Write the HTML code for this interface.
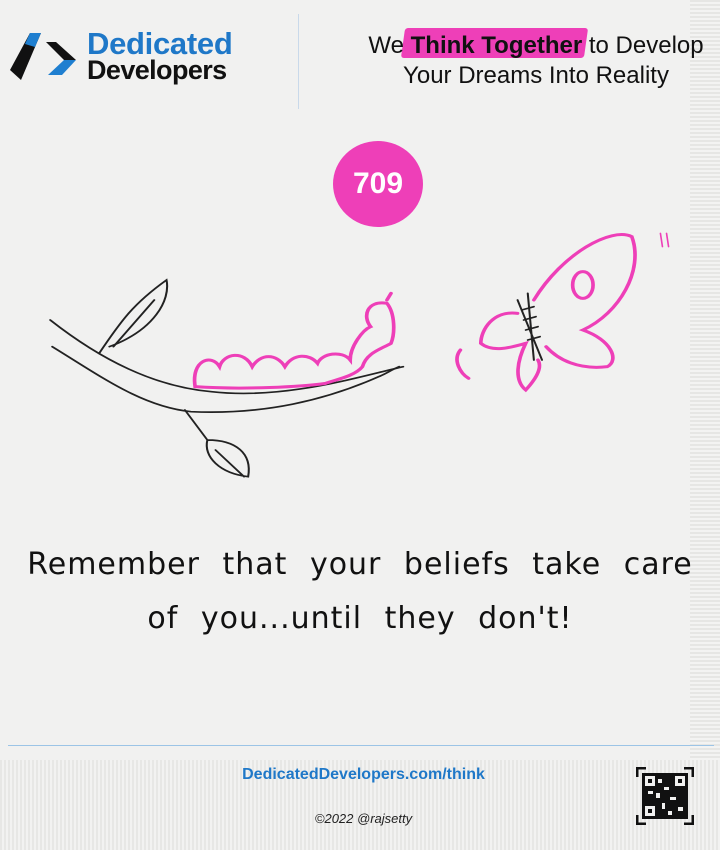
<!DOCTYPE html>
<html><head><meta charset="utf-8"><style>
body{margin:0;width:720px;height:850px;overflow:hidden;background:#f1f1f0;font-family:"Liberation Sans",sans-serif;position:relative}
.a{position:absolute}
</style></head><body>
<div class="a" style="left:690px;top:0;width:30px;height:850px;background:repeating-linear-gradient(0deg,#e6e6e4 0 2px,#f3f3f2 2px 4px)"></div>
<div class="a" style="left:0;top:760px;width:720px;height:90px;background:repeating-linear-gradient(90deg,#e7e7e5 0 2px,#f2f2f1 2px 4px)"></div>
<svg class="a" style="left:8px;top:30px" width="70" height="52" viewBox="0 0 70 52">
<polygon points="22,3 33,3 13,50 2,40" fill="#111"/>
<polygon points="22,3 33,3 27,17 17,14" fill="#1f7fd0"/>
<polygon points="38,12 48,12 68,30 56,30" fill="#111"/>
<polygon points="56,30 68,30 54,45 40,45" fill="#1f7fd0"/>
</svg>
<div class="a" style="left:87px;top:26px;font-size:31px;font-weight:bold;color:#1f78c8;letter-spacing:-0.3px">Dedicated</div>
<div class="a" style="left:87px;top:55px;font-size:27px;font-weight:bold;color:#111;letter-spacing:-0.6px">Developers</div>
<div class="a" style="left:298px;top:14px;width:1px;height:95px;background:#c9d9ea"></div>
<div class="a" style="left:403px;top:28px;width:183px;height:30px;background:#ee3fb8;transform:skewX(-8deg);border-radius:3px"></div>
<div class="a" style="left:330px;top:31px;width:412px;text-align:center;font-size:24px;color:#111;line-height:30px">We <b>Think Together</b> to Develop<br>Your Dreams Into Reality</div>
<div class="a" style="left:333px;top:141px;width:90px;height:86px;border-radius:50%;background:#ee3fb8;color:#fff;font-size:30px;font-weight:bold;text-align:center;line-height:86px">709</div>
<svg class="a" style="left:40px;top:220px" width="640" height="270" viewBox="0 0 1568 810" preserveAspectRatio="none" fill="none" stroke-linecap="round">
<g stroke="#222" stroke-width="5">
<path d="M25 300 C150 420 280 500 420 515 C600 540 780 470 890 440"/>
<path d="M30 380 C150 470 250 560 370 575 C550 585 700 540 830 470 C850 460 860 450 880 440"/>
<path d="M145 400 C200 300 230 250 310 180 C320 240 280 330 170 380"/>
<path d="M280 240 L180 380"/>
<path d="M355 570 L410 660 C400 710 440 760 510 770 C520 700 480 660 410 660 M430 690 L500 770"/>
<path d="M1170 240 L1230 420 M1195 220 L1210 420 M1180 270 L1210 260 M1185 300 L1215 290 M1190 330 L1220 320 M1195 360 L1225 350"/>
</g>
<g stroke="#ee3fb8" stroke-width="9">
<path d="M380 500 C370 420 420 400 440 440 C450 400 500 390 520 440 C540 400 580 400 600 440 C620 400 660 400 680 430 C690 400 740 390 760 420 C760 380 790 330 810 320 C790 290 800 240 850 250 C870 280 870 340 860 370 C830 390 800 400 790 440 C770 470 720 480 700 490 C640 500 500 510 380 500Z"/>
<path d="M850 240 L860 220"/>
<path d="M1210 240 C1280 100 1400 20 1450 50 C1480 150 1420 280 1330 330 C1400 360 1420 420 1390 440 C1320 450 1270 420 1240 380"/>
<path d="M1170 280 C1110 270 1080 330 1080 370 C1110 400 1160 380 1190 370 C1170 420 1160 480 1190 510 C1220 470 1230 440 1220 420"/>
<ellipse cx="1330" cy="195" rx="25" ry="40"/>
<path d="M1030 390 C1010 420 1030 460 1050 475"/>
</g>
<path d="M1520 40 L1525 80 M1535 40 L1540 80" stroke="#ee3fb8" stroke-width="4"/>
</svg>
<div class="a" style="left:0;top:538px;width:720px;text-align:center;font-family:'DejaVu Sans',cursive;font-size:30px;line-height:54px;color:#111;letter-spacing:1px;word-spacing:12px">Remember that your beliefs take care<br>of you...until they don't!</div>
<div class="a" style="left:8px;top:745px;width:706px;height:1px;background:#9cc4e6"></div>
<div class="a" style="left:0;top:766px;width:727px;text-align:center;font-size:16px;font-weight:bold;color:#1f78c8">DedicatedDevelopers.com/think</div>
<div class="a" style="left:0;top:811px;width:727px;text-align:center;font-size:13px;font-style:italic;color:#222">©2022 @rajsetty</div>
<svg class="a" style="left:636px;top:767px" width="58" height="58" viewBox="0 0 58 58">
<path d="M1 10V1H10M48 1H57V10M1 48V57H10M48 57H57V48" stroke="#111" stroke-width="3" fill="none"/>
<rect x="6" y="6" width="46" height="46" fill="#111"/>
<g fill="#f1f1f0"><rect x="9" y="9" width="10" height="10"/><rect x="39" y="9" width="10" height="10"/><rect x="9" y="39" width="10" height="10"/>
<rect x="22" y="12" width="4" height="4"/><rect x="28" y="20" width="5" height="3"/><rect x="20" y="26" width="4" height="5"/><rect x="34" y="30" width="6" height="3"/><rect x="26" y="36" width="3" height="6"/><rect x="42" y="40" width="5" height="4"/><rect x="12" y="24" width="5" height="3"/><rect x="32" y="44" width="4" height="4"/></g>
<g fill="#111"><rect x="12" y="12" width="4" height="4"/><rect x="42" y="12" width="4" height="4"/><rect x="12" y="42" width="4" height="4"/></g>
</svg>
</body></html>
